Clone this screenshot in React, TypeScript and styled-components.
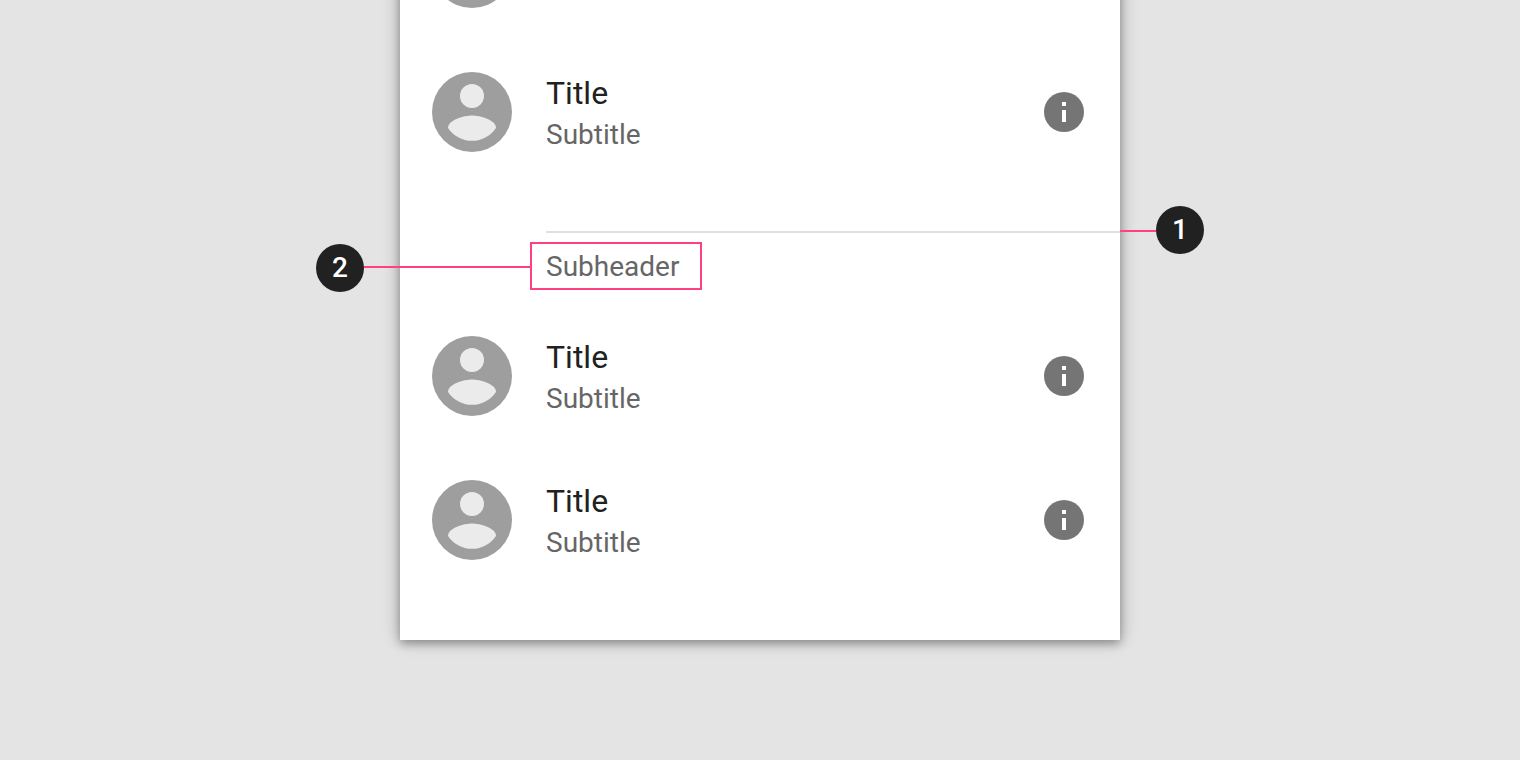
import React from "react";
import styled, { createGlobalStyle } from "styled-components";

const GlobalStyle = createGlobalStyle`
  *, *::before, *::after { box-sizing: border-box; }
  body {
    margin: 0;
    background: #e4e4e4;
    font-family: Roboto, "Liberation Sans", sans-serif;
  }
`;

const Page = styled.main`
  min-height: 100vh;
  overflow: hidden;
  padding: 0 24px 120px;
`;

/* The list is scrolled, so its first row is mostly out of view. */
const Card = styled.section`
  max-width: 720px;
  margin: -104px auto 0;
  padding-bottom: 48px;
  background: #fff;
  box-shadow: 0 4px 8px rgba(0, 0, 0, 0.24), 0 0 16px rgba(0, 0, 0, 0.3);
`;

const List = styled.ul`
  list-style: none;
  margin: 0;
  padding: 0;
`;

const Row = styled.li`
  display: flex;
  align-items: flex-start;
  padding: 32px 36px 32px 32px;
`;

const Avatar = styled.svg`
  flex: none;
  display: block;
  width: 80px;
  height: 80px;
`;

const Texts = styled.div`
  flex: 1;
  min-width: 0;
  height: 80px;
  margin-left: 34px;
`;

const Title = styled.div`
  font-size: 32px;
  line-height: 42px;
  color: #212121;
`;

const Subtitle = styled.div`
  font-size: 28px;
  line-height: 42px;
  color: #666;
`;

const InfoButton = styled.button`
  flex: none;
  align-self: center;
  padding: 0;
  border: 0;
  border-radius: 50%;
  background: none;
  cursor: pointer;
`;

const InfoIcon = styled.svg`
  display: block;
  width: 40px;
  height: 40px;
`;

const Section = styled.div`
  padding: 47px 0 14px;
`;

const Divider = styled.div`
  position: relative;
  height: 2px;
  margin-left: 146px;
  background: #e0e0e0;
`;

const Subheader = styled.h2`
  position: relative;
  width: 172px;
  height: 48px;
  margin: 9px 0 0 130px;
  padding: 0 14px;
  border: 2px solid #ff4081;
  font-size: 28px;
  font-weight: 400;
  line-height: 46px;
  color: #666;
`;

const Leader = styled.span<{ $length: number }>`
  width: ${(p) => p.$length}px;
  height: 2px;
  background: #ff4081;
`;

const Callout = styled.div<{ $side: "left" | "right" }>`
  position: absolute;
  display: flex;
  align-items: flex-start;
  ${(p) =>
    p.$side === "left"
      ? "right: 100%; top: 0; flex-direction: row-reverse;"
      : "left: 100%; top: -25px;"}

  ${Leader} {
    margin-top: ${(p) => (p.$side === "left" ? 22 : 24)}px;
  }
`;

const Bubble = styled.span`
  width: 48px;
  height: 48px;
  border-radius: 50%;
  background: #212121;
  color: #fff;
  font-size: 28px;
  font-weight: 500;
  line-height: 48px;
  text-align: center;
`;

function Person() {
  return (
    <Row>
      <Avatar viewBox="2 2 20 20" aria-hidden="true">
        <circle cx="12" cy="12" r="10" fill="#9e9e9e" />
        <circle cx="12" cy="8" r="3" fill="#ebebeb" />
        <path
          fill="#ebebeb"
          d="M12 19.2c-2.5 0-4.71-1.28-6-3.22.03-1.99 4-3.08 6-3.08 1.99 0 5.97 1.09 6 3.08-1.29 1.94-3.5 3.22-6 3.22z"
        />
      </Avatar>
      <Texts>
        <Title>Title</Title>
        <Subtitle>Subtitle</Subtitle>
      </Texts>
      <InfoButton type="button" aria-label="Info">
        <InfoIcon viewBox="2 2 20 20" aria-hidden="true">
          <circle cx="12" cy="12" r="10" fill="#757575" />
          <path fill="#fff" d="M11 7h2v2h-2zM11 11h2v6h-2z" />
        </InfoIcon>
      </InfoButton>
    </Row>
  );
}

export default function App() {
  return (
    <>
      <GlobalStyle />
      <Page>
        <Card>
          <List>
            <Person />
            <Person />
          </List>
          <Section>
            <Divider>
              <Callout $side="right">
                <Leader $length={36} />
                <Bubble>1</Bubble>
              </Callout>
            </Divider>
            <Subheader>
              Subheader
              <Callout $side="left">
                <Leader $length={168} />
                <Bubble>2</Bubble>
              </Callout>
            </Subheader>
          </Section>
          <List>
            <Person />
            <Person />
          </List>
        </Card>
      </Page>
    </>
  );
}
